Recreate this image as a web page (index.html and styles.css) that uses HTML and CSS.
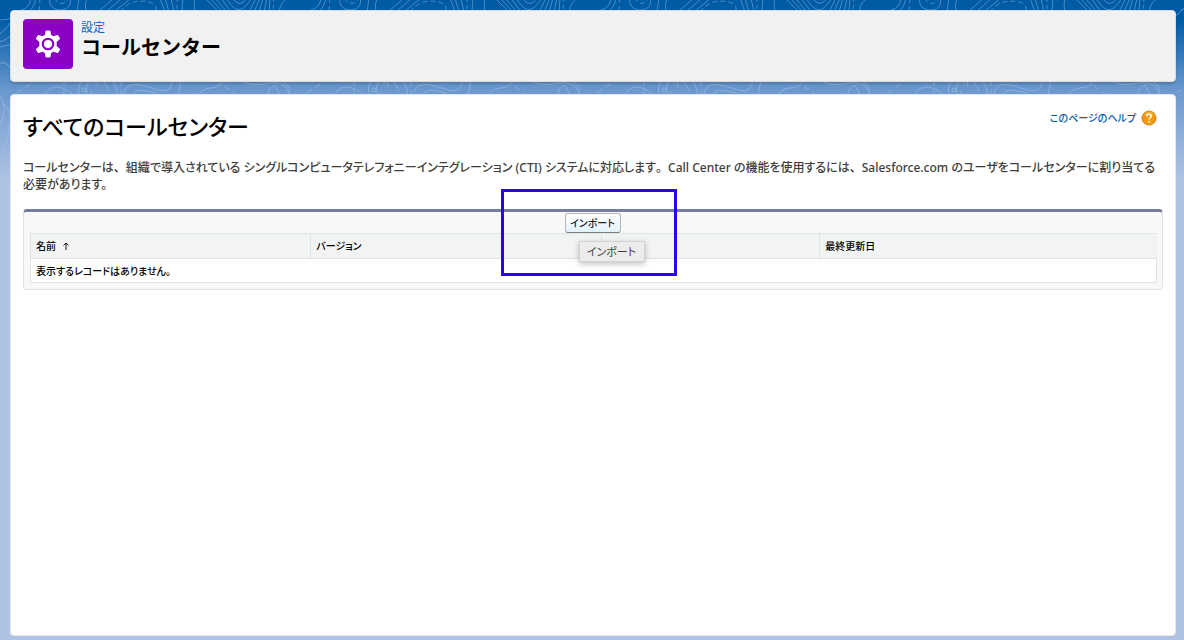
FILE: index.html
```html
<!DOCTYPE html>
<html lang="ja">
<head>
<meta charset="utf-8">
<meta name="viewport" content="width=device-width, initial-scale=1">
<title>コールセンター</title>
<link rel="stylesheet" href="styles.css">
</head>
<body>
<svg class="backdrop" aria-hidden="true">
  <defs>
    <pattern id="contours" width="290" height="220" patternUnits="userSpaceOnUse">
      <g fill="none" stroke="#b9d3f0" stroke-opacity=".4" stroke-width="1">
        <path d="M31-2Q30 8 21 10M0 20Q14 20 22 10M36-2Q34 9 26 14M50-2C46 14 75 14 70-2M79-2L77 12M87-2Q82 12 92 18"/>
        <path d="M40-2L39 12M54-2Q62 9 69-2M120 12Q130-2 149 2Q160 5 154 14" stroke-dasharray="5 3"/>
        <path d="M98 12L114-2M106 12L122-2M114 12L131-2M160-2L165 12M165-2L169 12M171-2L174 12M183-2L182 12"/>
        <path d="M177-2V12" stroke-dasharray="4 3"/>
        <path d="M195 12Q193 5 195-2M205-2L219 12M210-2L223 12M215-2L227 12M221-2L231 12M226-2C236 14 242 13 252-2M232-2Q240 9 247-2M249 12L256-2M254 12L260-2M259 12L263-2M264 12L267-2M270-2L269 12M279 12Q281 0 289-2"/>
        <path d="M274-2L273 12" stroke-dasharray="4 3"/>
        <path d="M0 34Q8 28 12 20M0 42Q6 40 12 35M0 47Q8 45 12 44M0 63Q11 61 12 76M4 104Q12 111 10 125Q8 143 0 155"/>
        <path d="M0 96Q4 101 4 108Q4 119 0 124"/>
        <path d="M0 157H12M0 164L12 161M0 170L12 172M2 179Q7 171 12 178"/>
        <path d="M45 94Q50 86 59 87Q66 88 73 95M82 80Q76 88 80 96M89 81Q84 89 89 96M112 81Q120 90 116 96M124 95C125 78 145 86 158 90S172 83 173 80M133 96C135 87 145 91 157 93M181 80L178 96M199 95Q201 89 210 88Q220 88 223 80M240 80Q249 86 263 84C280 80 289 86 289 96M267 96Q269 87 275 85L280 95"/>
        <path d="M17 93L32 83M64 80V96M224 86L235 94M121 80V96" stroke-dasharray="6 4"/>
        <path d="M93 84L97 81L98 87M103 81L107 87L109 91M91 91V96"/>
        <circle cx="84" cy="90" r="2"/>
        <path d="M276 37L290 27M276 42L290 34M276 51L290 40M276 80Q292 82 290 96"/>
      </g>
    </pattern>
    <linearGradient id="fade" x1="0" y1="0" x2="0" y2="1">
      <stop offset="0" stop-color="#fff"/>
      <stop offset=".6" stop-color="#fff"/>
      <stop offset=".95" stop-color="#000"/>
    </linearGradient>
    <mask id="fade-mask"><rect width="100%" height="100%" fill="url(#fade)"/></mask>
  </defs>
  <rect width="100%" height="100%" fill="url(#contours)" mask="url(#fade-mask)"/>
</svg>

<header class="page-header">
  <span class="app-icon">
    <svg viewBox="0 0 28 28" aria-hidden="true">
      <g fill="#fff" stroke="#fff" stroke-width="2" stroke-linejoin="round">
        <path d="M12.500 1.500h3l.8 4.200 2.900 1.700 4.200-1.500 1.600 2.700-3.300 2.800v5.200l3.300 2.800-1.600 2.700-4.200-1.500-2.900 1.700-.8 4.200h-3l-.8-4.200-2.900-1.700-4.200 1.500L3 19.400l3.300-2.800v-5.200L3 8.600l1.600-2.700 4.200 1.500 2.900-1.700z"/>
      </g>
      <circle cx="14" cy="14" r="5.200" fill="#fff" stroke="#8a00c4" stroke-width="2.200"/>
    </svg>
  </span>
  <div class="page-titles">
    <p class="breadcrumb">設定</p>
    <h1 class="page-title">コールセンター</h1>
  </div>
</header>

<main class="content">
  <div class="content-head">
    <h2 class="content-title">すべてのコールセンター</h2>
    <a class="help" href="#">このページのヘルプ
      <svg class="help-icon" viewBox="0 0 16 16" aria-hidden="true">
        <defs><linearGradient id="orange" x1="0" y1="0" x2="0" y2="1"><stop offset="0" stop-color="#f6b63c"/><stop offset=".5" stop-color="#f59300"/><stop offset="1" stop-color="#f9a000"/></linearGradient></defs>
        <circle cx="8" cy="8" r="7" fill="url(#orange)" stroke="#c77f16"/>
        <path d="M5.700 6.300Q5.800 4.200 8 4.200T10.300 6.100Q10.300 7.200 9.100 7.900Q8.100 8.500 8.100 9.500" fill="none" stroke="#fff" stroke-width="1.600"/>
        <circle cx="8.100" cy="11.700" r="1" fill="#fff"/>
      </svg>
    </a>
  </div>
  <p class="intro">コールセンターは<span class="mark">、</span>組織で導入されている シングルコンピュータテレフォニーインテグレーション (CTI) システムに対応します<span class="mark">。</span>Call Center の機能を使用するには<span class="mark">、</span>Salesforce.com のユーザをコールセンターに割り当てる<br>必要があります。</p>

  <section class="panel">
    <div class="toolbar">
      <div class="import">
        <button class="import-button" type="button" aria-describedby="import-tip">インポート</button>
        <span class="highlight"></span>
        <span class="tooltip" id="import-tip" role="tooltip">インポート</span>
      </div>
    </div>
    <table class="records">
      <colgroup><col class="col-name"><col class="col-version"><col class="col-created"><col></colgroup>
      <thead>
        <tr>
          <th scope="col">名前<svg class="sort" viewBox="0 0 8 8" aria-hidden="true"><path d="M4 8V1M1.500 3.500L4 1l2.500 2.500" fill="none" stroke="#111"/></svg></th>
          <th scope="col">バージョン</th>
          <th scope="col">作成日</th>
          <th scope="col">最終更新日</th>
        </tr>
      </thead>
      <tbody>
        <tr><td colspan="4">表示するレコードはありません。</td></tr>
      </tbody>
    </table>
  </section>
</main>
</body>
</html>
```
FILE: styles.css
```css
* {
  box-sizing: border-box;
}

body {
  display: flex;
  flex-direction: column;
  gap: 12px;
  min-height: 100vh;
  margin: 0;
  padding: 10px 8px 4px 10px;
  background: #aec3e3 linear-gradient(#005ba5 0, #005ba5 20px, #6b98cd 90px, #aec3e3 180px) no-repeat;
  color: #000;
  font-family: "Noto Sans", "Noto Sans CJK JP", sans-serif;
  font-size: 10px;
  font-feature-settings: "palt";
}

h1, h2, p {
  margin: 0;
}

.backdrop {
  position: absolute;
  z-index: -1;
  top: 0;
  left: 0;
  width: 100%;
  height: 220px;
}

.page-header {
  display: flex;
  gap: 8px;
  min-height: 72px;
  padding: 8px 12px;
  border: 1px solid #dddbda;
  border-radius: 4px;
  background: #f1f1f1;
  box-shadow: 0 2px 2px rgba(0, 0, 0, .15);
}

.app-icon {
  display: grid;
  place-items: center;
  width: 50px;
  height: 50px;
  border-radius: 4px;
  background: #8a00c4;
}

.app-icon svg {
  width: 28px;
  height: 28px;
}

.breadcrumb {
  color: #0b67c8;
  font-size: 12px;
  line-height: 17px;
}

.page-title {
  font-size: 20px;
  font-weight: 700;
  line-height: 24px;
  font-feature-settings: normal;
}

.content {
  flex: 1;
  padding: 15px 12px;
  border: 1px solid #e6e6e6;
  border-radius: 4px;
  background: #fff;
}

.content-head {
  display: flex;
  justify-content: space-between;
  align-items: flex-start;
}

.content-title {
  font-size: 22px;
  font-weight: 500;
  line-height: 32px;
}

.help {
  display: flex;
  align-items: center;
  gap: 5px;
  padding-right: 6px;
  color: #015ba7;
  font-size: 10px;
  font-weight: 500;
  line-height: 16px;
  text-decoration: none;
}

.help-icon {
  width: 16px;
  height: 16px;
}

.intro {
  margin: 17px 0 16px;
  color: #3e3e3c;
  font-size: 12px;
  font-weight: 500;
  line-height: 17px;
}

.mark {
  font-feature-settings: normal;
}

.panel {
  padding: 0 5px 6px 6px;
  border: 1px solid #e0e3e5;
  border-top: 3px solid #747e9d;
  border-radius: 4px;
  background: #f8f8f8;
}

.toolbar {
  display: flex;
  justify-content: center;
  padding: 1px 2px 0 0;
}

.import {
  position: relative;
}

.import-button {
  display: block;
  width: 56px;
  height: 20px;
  padding: 0 0 2px;
  border: 1px solid #b5b5b5;
  border-bottom-color: #7f7f7f;
  border-radius: 3px;
  background: linear-gradient(#fff, #e2f3fe);
  color: #222;
  font-family: inherit;
  font-size: 10px;
  font-weight: 500;
  font-feature-settings: inherit;
}

.highlight {
  position: absolute;
  z-index: 1;
  top: -24px;
  left: -64px;
  width: 176px;
  height: 87px;
  border: 3px solid #2c00fa;
  pointer-events: none;
}

.tooltip {
  position: absolute;
  top: 28px;
  left: 14px;
  width: 66px;
  border: 1px solid #d2d2d2;
  background: #ececec;
  box-shadow: 0 2px 6px rgba(0, 0, 0, .25);
  color: #444;
  font-size: 11px;
  line-height: 19px;
  text-align: center;
}

.records {
  width: 100%;
  border-collapse: collapse;
  table-layout: fixed;
  background: #fff;
}

.col-name {
  width: 24.9%;
}

.col-version {
  width: 25.8%;
}

.col-created {
  width: 19.4%;
}

.records th,
.records td {
  height: 25px;
  padding: 0 5px;
  border: 1px solid #dfe4e6;
  line-height: 16px;
  text-align: left;
}

.records th {
  background: #f2f4f3;
  font-weight: 500;
}

.records th:last-child {
  border-right-color: #f2f4f3;
}

.records td {
  height: 24px;
  font-weight: 500;
}

.sort {
  width: 8px;
  height: 8px;
  margin-left: 6px;
}
```
